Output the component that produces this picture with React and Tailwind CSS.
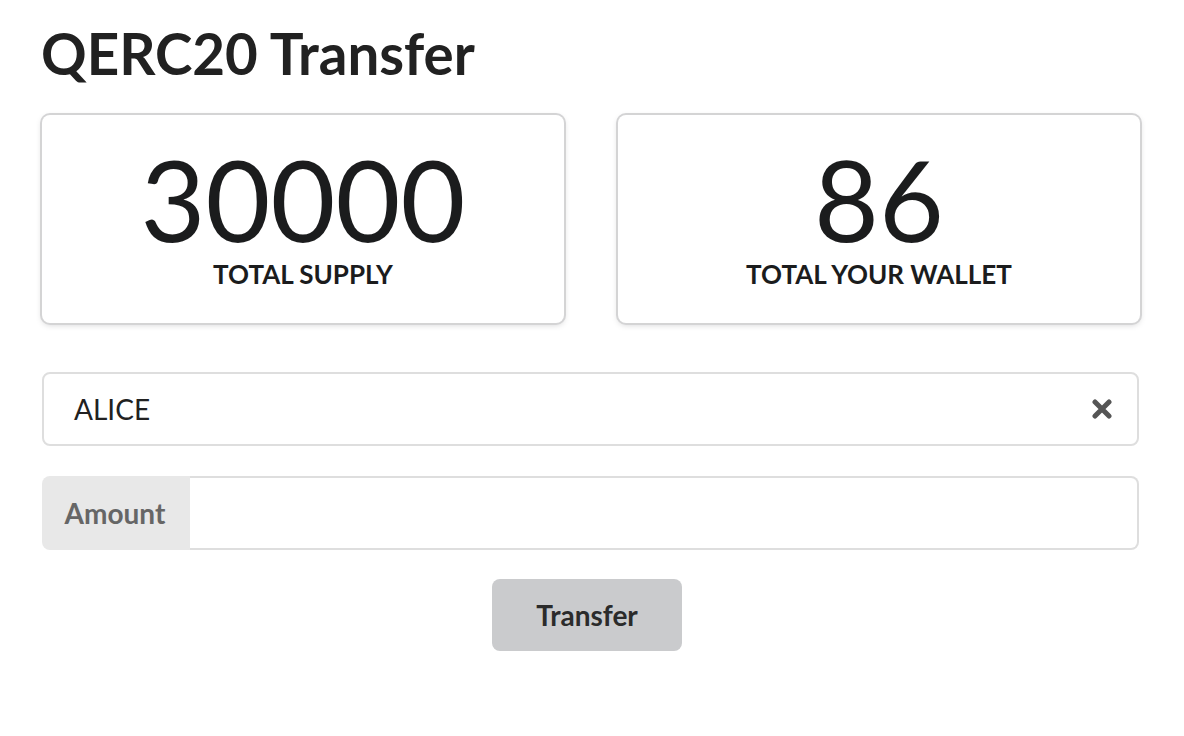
import React, { useState } from "react";

const StatCard = ({ value, label }) => (
  <div className="flex-1 rounded-lg bg-white shadow-[0_2px_6px_0_#d4d4d5,0_0_0_2px_#d4d4d5] h-[208px] flex flex-col items-center pt-[34px]">
    <div className="text-[112px] leading-[100px] font-normal text-[#1b1c1d]">{value}</div>
    <div className="mt-[12px] text-[26px] leading-none font-bold uppercase text-[#1b1c1d]">
      {label}
    </div>
  </div>
);

const App = () => {
  const [recipient, setRecipient] = useState("ALICE");
  const [amount, setAmount] = useState("");

  return (
    <div className="w-[1184px] h-[736px] bg-white font-['Lato','Liberation_Sans',sans-serif] text-[#212121]">
      <div className="pl-[41px] pr-[43px] pt-[17px]">
        <h1 className="text-[56.5px] leading-[72px] font-bold text-[#212121]">QERC20 Transfer</h1>

        {/* Stats */}
        <div className="mt-[26px] flex gap-[54px] px-[1px]">
          <StatCard value="30000" label="Total Supply" />
          <StatCard value="86" label="Total your wallet" />
        </div>

        {/* Recipient dropdown */}
        <div className="mt-[49px] ml-[1px] mr-[2px] h-[74px] rounded-lg border-2 border-[#dedede] flex items-center pl-[30px] pr-[27px]">
          <span className="flex-1 text-[28px] text-[#212121]">{recipient}</span>
          <button onClick={() => setRecipient("")} className="text-[#555] mr-[-2px]">
            <svg width="20" height="20" viewBox="0 0 20 20">
              <path d="M3 3 L17 17 M17 3 L3 17" stroke="#555" strokeWidth="5" strokeLinecap="round" />
            </svg>
          </button>
        </div>

        {/* Amount */}
        <div className="mt-[30px] ml-[1px] mr-[2px] h-[74px] flex">
          <div className="w-[148px] bg-[#e8e8e8] rounded-l-lg flex items-center justify-center text-[28px] font-bold text-[#666] pr-[2px]">
            Amount
          </div>
          <input
            value={amount}
            onChange={(e) => setAmount(e.target.value)}
            className="flex-1 rounded-r-lg border-2 border-l-0 border-[#dedede] outline-none px-[28px] text-[28px]"
          />
        </div>

        {/* Submit */}
        <div className="mt-[29px] flex justify-center pr-[8px]">
          <button className="w-[190px] h-[72px] rounded-lg bg-[#cacbcd] text-[28px] font-bold text-[#2b2b2b]">
            Transfer
          </button>
        </div>
      </div>
    </div>
  );
};

export default App;
